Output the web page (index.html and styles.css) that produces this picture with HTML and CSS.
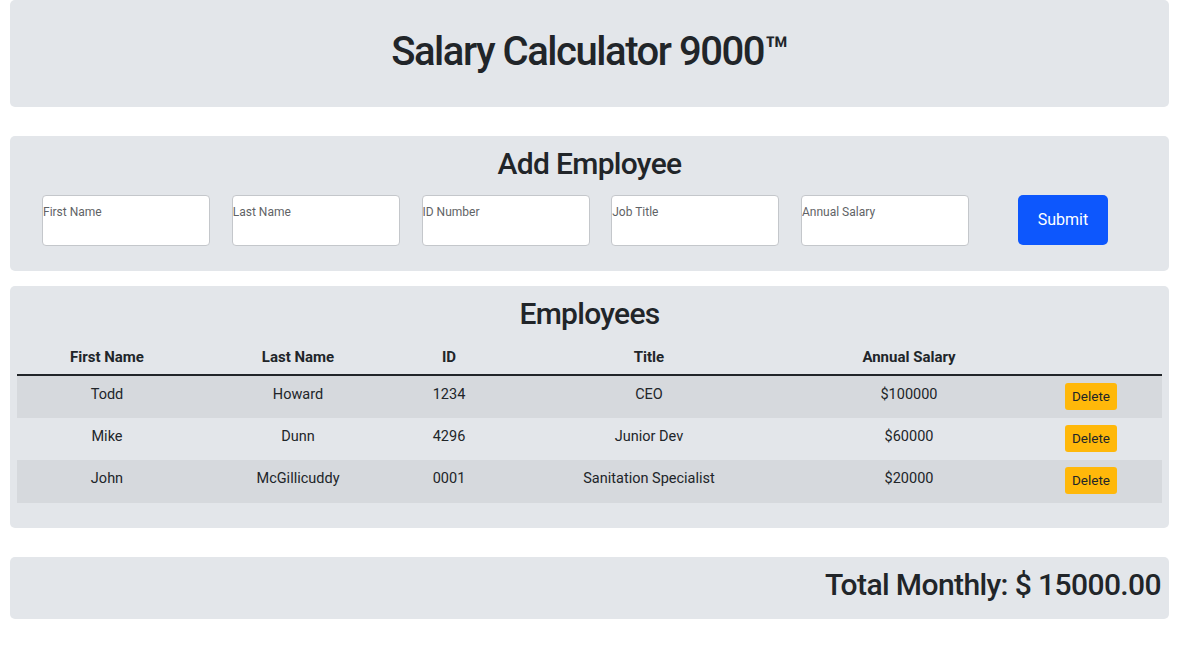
FILE: index.html
```html
<!DOCTYPE html>
<html lang="en">
<head>
<meta charset="utf-8">
<title>Salary Calculator 9000™</title>
<link rel="stylesheet" href="styles.css">
</head>
<body>
<div class="page">
  <header class="panel header">
    <h1 class="title">Salary Calculator 9000™</h1>
  </header>

  <section class="panel form-panel">
    <h2 class="section-title">Add Employee</h2>
    <form class="emp-form">
      <input class="field" type="text" placeholder="First Name">
      <input class="field" type="text" placeholder="Last Name">
      <input class="field" type="text" placeholder="ID Number">
      <input class="field" type="text" placeholder="Job Title">
      <input class="field" type="text" placeholder="Annual Salary">
      <button class="submit-btn" type="button">Submit</button>
    </form>
  </section>

  <section class="panel table-panel">
    <h2 class="section-title">Employees</h2>
    <table class="emp-table">
      <colgroup>
        <col class="c1"><col class="c2"><col class="c3"><col class="c4"><col class="c5"><col class="c6">
      </colgroup>
      <thead>
        <tr>
          <th>First Name</th>
          <th>Last Name</th>
          <th>ID</th>
          <th>Title</th>
          <th>Annual Salary</th>
          <th></th>
        </tr>
      </thead>
      <tbody>
        <tr>
          <td>Todd</td><td>Howard</td><td>1234</td><td>CEO</td><td>$100000</td>
          <td><button class="del-btn" type="button">Delete</button></td>
        </tr>
        <tr>
          <td>Mike</td><td>Dunn</td><td>4296</td><td>Junior Dev</td><td>$60000</td>
          <td><button class="del-btn" type="button">Delete</button></td>
        </tr>
        <tr>
          <td>John</td><td>McGillicuddy</td><td>0001</td><td>Sanitation Specialist</td><td>$20000</td>
          <td><button class="del-btn" type="button">Delete</button></td>
        </tr>
      </tbody>
    </table>
  </section>

  <footer class="panel total-panel">
    <h2 class="total">Total Monthly: $ 15000.00</h2>
  </footer>
</div>
</body>
</html>
```

FILE: styles.css
```css
* { box-sizing: border-box; }

html, body {
  margin: 0;
  padding: 0;
  background: #ffffff;
}

body {
  font-family: Roboto, "Noto Sans", "Liberation Sans", sans-serif;
  color: #212529;
  font-size: 16px;
  line-height: 1.5;
}

.page {
  width: 1159px;
  margin-left: 10px;
  display: flex;
  flex-direction: column;
}

.panel {
  background: #e3e6ea;
  border-radius: 5px;
}

.header {
  padding: 28px 0 31px;
}

.title {
  margin: 0;
  text-align: center;
  font-size: 40px;
  font-weight: 500;
  line-height: 48px;
  letter-spacing: -1.45px;
}

.section-title {
  margin: 0;
  text-align: center;
  font-size: 30px;
  font-weight: 500;
  line-height: 38.4px;
  letter-spacing: -0.7px;
}

.form-panel {
  margin-top: 29px;
  padding: 9px 0 25px;
}

.emp-form {
  margin-top: 12px;
  display: flex;
  align-items: flex-start;
  padding-left: 32px;
}

.field {
  width: 168px;
  height: 51px;
  margin-right: 21.75px;
  padding: 6px 0 24px 0;
  border: 1px solid #c4c7cb;
  border-radius: 4px;
  background: #ffffff;
  font-family: inherit;
  font-size: 12px;
  color: #212529;
  outline: none;
}

.field:nth-of-type(5) {
  margin-right: 49px;
}

.field::placeholder {
  color: #5f6366;
}

.submit-btn {
  width: 90px;
  height: 50px;
  border: none;
  border-radius: 5px;
  background: #0d57fd;
  color: #ffffff;
  font-family: inherit;
  font-size: 16px;
  line-height: 24px;
  padding-top: 1px;
  cursor: pointer;
}

.table-panel {
  margin-top: 15px;
  padding: 9px 7px 25px;
}

.emp-table {
  width: 100%;
  margin-top: 7px;
  border-collapse: collapse;
  table-layout: fixed;
}

.c1 { width: 180px; }
.c2 { width: 202px; }
.c3 { width: 100px; }
.c4 { width: 300px; }
.c5 { width: 220px; }
.c6 { width: 143px; }

.emp-table th {
  padding: 4px 8px 5px;
  font-weight: 700;
  font-size: 15px;
  line-height: 24px;
  text-align: center;
  border-bottom: 2px solid #212529;
}

.emp-table td {
  padding: 7px 8px 7px;
  height: 42.7px;
  font-size: 14.5px;
  line-height: 24px;
  text-align: center;
  vertical-align: top;
}

.emp-table tbody tr:nth-child(odd) {
  background: #d6d9dd;
}

.del-btn {
  height: 27px;
  margin-top: 0;
  padding: 3px 7px;
  border: none;
  border-radius: 3px;
  background: #ffb80a;
  color: #212529;
  font-family: inherit;
  font-size: 13.5px;
  line-height: 21px;
  cursor: pointer;
  margin-left: 1px;
}

.total-panel {
  margin-top: 29px;
  padding: 9px 8px 15px;
}

.total {
  margin: 0;
  text-align: right;
  font-size: 30px;
  font-weight: 500;
  line-height: 38.4px;
  letter-spacing: -0.6px;
}
```
